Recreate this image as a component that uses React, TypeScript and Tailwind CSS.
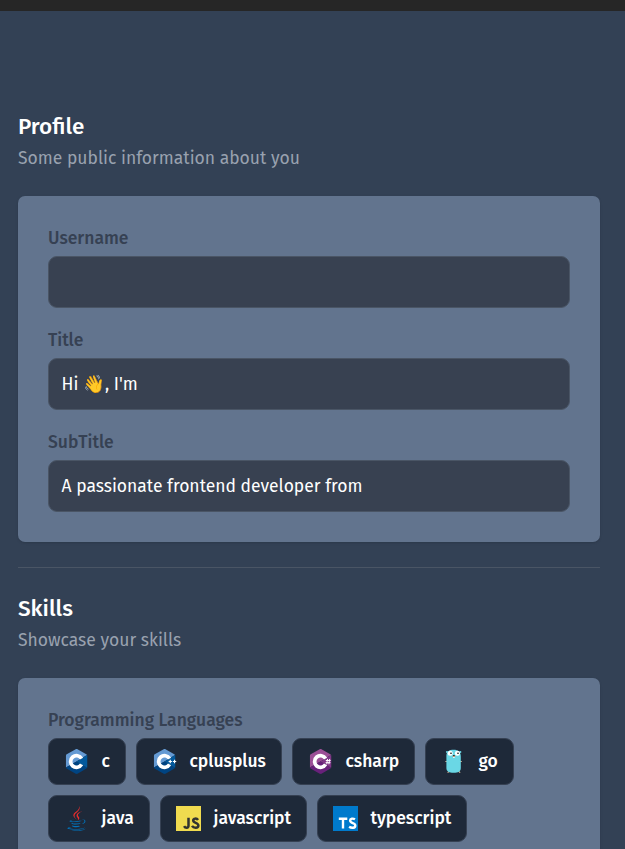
import React from 'react';

function CFamily({ light, mid, dark, mark }: { light: string; mid: string; dark: string; mark?: 'plus' | 'sharp' }) {
  return (
    <svg viewBox="0 0 128 128" className="size-[25px] shrink-0">
      <path fill={light} d="M10 95V34c0-3 1-5 4-7L60 1c3-2 6-2 9 0l45 26 4 4L64 64Z" />
      <path fill={dark} d="M10 95c0 2 1 4 3 5l47 27c3 1 6 1 9 0l46-27 3-4-54-32Z" />
      <path fill={mid} d="M118 31c1 1 1 2 1 4v58l-1 3-54-32Z" />
      <path fill="none" stroke="#fff" strokeWidth="19" d="M90 49a30 30 0 1 0 0 30" />
      {mark === 'plus' && <path stroke="#fff" strokeWidth="6" d="M85 64h17M93.500 55.500v17M107 64h17M115.500 55.500v17" />}
      {mark === 'sharp' && <path stroke="#fff" strokeWidth="5" d="M100 51l-4 27M111 51l-4 27M91 59h25M90 70h25" />}
    </svg>
  );
}

function GoIcon() {
  return (
    <svg viewBox="0 0 25 25" className="size-[25px] shrink-0">
      <path stroke="#c7ad91" strokeWidth="1.2" strokeLinecap="round" d="M4.800 12.500h2M19 12.500h1.400M7 23.300l1.500-1.500M18.800 23.300l-1.500-1.500" />
      <circle cx="6" cy="3" r="1.100" fill="#6ad7e5" />
      <circle cx="19.300" cy="3" r="1.100" fill="#6ad7e5" />
      <path fill="#6ad7e5" d="M5.400 8C5.200 2.800 8 .8 12.700.8S20 3 19.800 8v11c0 3.600-2.500 4.800-7.100 4.800S5.400 22.500 5.400 19Z" />
      <circle cx="9.200" cy="4.200" r="2.500" fill="#fff" />
      <circle cx="16.400" cy="4.200" r="2.500" fill="#fff" />
      <circle cx="10" cy="4.300" r=".8" />
      <circle cx="17" cy="4.300" r=".8" />
      <path fill="#fff" d="M12.200 7.500h1.400v1.600h-1.400Z" />
      <ellipse cx="12.900" cy="7.200" rx="1.500" ry=".9" fill="#b79c81" />
      <ellipse cx="12.900" cy="6.500" rx=".8" ry=".5" />
    </svg>
  );
}

function JavaIcon() {
  return (
    <svg viewBox="0 0 128 128" className="size-[25px] shrink-0">
      <path fill="#0074bd" d="M47.6 98.1s-4.8 2.8 3.4 3.7c9.9 1.1 14.9 1 25.8-1.1 0 0 2.9 1.8 6.9 3.4-24.5 10.4-55.3-.7-36.1-6ZM44.6 84.5s-5.3 4 2.8 4.8c10.6 1.1 18.9 1.2 33.3-1.6 0 0 2 2 5.1 3.1-29.5 8.6-62.3.7-41.2-6.3ZM102.1 108.3s3.5 2.9-3.9 5.200c-14.2 4.300-59 5.600-71.400.2-4.500-1.900 3.900-4.700 6.500-5.200 2.800-.6 4.300-.5 4.300-.5-5-3.500-32.100 6.900-13.800 9.800 50.100 8.100 91.300-3.700 78.300-9.500ZM49.9 70.2s-22.8 5.4-8.1 7.4c6.2.8 18.6.6 30.1-.3 9.4-.8 18.9-2.5 18.9-2.500s-3.300 1.400-5.700 3.100c-23.100 6.100-67.600 3.200-54.800-3 10.800-5.200 19.600-4.700 19.600-4.700ZM90.600 92.900c23.500-12.200 12.600-23.900 5-22.400-1.800.4-2.700.7-2.700.7s.7-1.100 2-1.600c15-5.300 26.500 15.500-4.800 23.800ZM52.200 126.100c22.500 1.400 57.100-.8 57.900-11.500 0 0-1.600 4-18.600 7.200-19.200 3.600-42.800 3.200-56.900.9 0 0 2.900 2.400 17.600 3.400Z" />
      <path fill="#ea2d2e" d="M76.500 1.600S89.500 14.600 64.200 34.500c-20.300 16-4.600 25.200 0 35.700-11.900-10.700-20.500-20.100-14.700-28.900C58.100 28.500 81.700 22.300 76.500 1.600ZM69.800 61c6.100 7-1.600 13.300-1.600 13.300s15.400-7.900 8.300-17.900c-6.600-9.300-11.700-13.900 15.700-29.800 0 0-43 10.700-22.400 34.400Z" />
    </svg>
  );
}

function LetterIcon({ ts = false }: { ts?: boolean }) {
  return (
    <svg viewBox="0 0 25 25" className="size-[25px] shrink-0">
      <rect width="25" height="25" fill={ts ? '#007acc' : '#f0db4f'} />
      {ts ? (
        <path fill="none" stroke="#fff" strokeWidth="2.4" d="M5.800 12.700h8.500M10 12.700v9.900M22 13.300c-2-1.100-4.900-.9-4.900 1.300 0 3 5.200 2 5.200 4.800 0 2.900-3.800 2.900-6.200 1.400" />
      ) : (
        <path fill="none" stroke="#323330" strokeWidth="2.500" d="M12.500 11.700v8.100c0 2.500-3.300 2.400-4.400.3M22 14c-1.200-2-4.800-1.800-4.800.5 0 2.800 5.200 2 5.200 5 0 3-4.800 2.900-6.400.4" />
      )}
    </svg>
  );
}

function Heading({ title, subtitle }: { title: string; subtitle: string }) {
  return (
    <header>
      <h3 className="h-8 pt-px text-[22.5px] leading-8 font-medium text-white">{title}</h3>
      <p className="pt-px text-[17.5px] leading-8 text-gray-400">{subtitle}</p>
    </header>
  );
}

const labelClass = 'block h-[26px] pt-px text-[17.5px] leading-[26px] font-medium text-gray-700';

function Field({ label, value }: { label: string; value: string }) {
  return (
    <div className="h-[78px]">
      <label className={labelClass}>{label}</label>
      <div className="mt-[5px] flex h-[52px] items-center rounded-[9px] border border-gray-600 bg-[#384151] px-[12.5px] pt-[2px] text-[17.5px] text-white">
        <span className="whitespace-pre">{value}</span>
      </div>
    </div>
  );
}

function Chip({ icon, name, width }: { icon: React.ReactNode; name: string; width: string }) {
  return (
    <div className={`flex h-[47px] items-center rounded-[9px] border border-gray-700 bg-gray-800 pl-[15px] ${width}`}>
      {icon}
      <span className="ml-[12.5px] pt-px text-[17.5px] font-medium whitespace-nowrap text-white">{name}</span>
    </div>
  );
}

export default function App() {
  return (
    <main className="h-[849px] overflow-hidden bg-[#334155] font-['Fira_Sans','Noto_Sans',sans-serif]">
      <div className="h-[11px] bg-[#262626]" />
      <div className="pt-[99px] pr-[25px] pl-[18px]">
        <Heading title="Profile" subtitle="Some public information about you" />
        <section className="mt-[21px] flex h-[346px] flex-col gap-6 rounded-[7px] bg-slate-500 px-[30px] pt-[29px] shadow-sm">
          <Field label="Username" value="" />
          <Field label="Title" value="Hi 👋, I'm" />
          <Field label="SubTitle" value="A passionate frontend developer from" />
        </section>
        <hr className="mt-[25px] mb-6 border-gray-600" />
        <Heading title="Skills" subtitle="Showcase your skills" />
        <section className="mt-[21px] h-[240px] rounded-[7px] bg-slate-500 px-[30px] pt-[29px] shadow-sm">
          <div className={labelClass}>Programming Languages</div>
          <div className="mt-[5px] flex flex-wrap gap-[10px]">
            <Chip name="c" width="w-[78px]" icon={<CFamily light="#659ad3" mid="#03599c" dark="#004482" />} />
            <Chip name="cplusplus" width="w-[146px]" icon={<CFamily light="#659ad3" mid="#03599c" dark="#004482" mark="plus" />} />
            <Chip name="csharp" width="w-[123px]" icon={<CFamily light="#9b4f96" mid="#803788" dark="#68217a" mark="sharp" />} />
            <Chip name="go" width="w-[89px]" icon={<GoIcon />} />
            <Chip name="java" width="w-[102px]" icon={<JavaIcon />} />
            <Chip name="javascript" width="w-[147px]" icon={<LetterIcon />} />
            <Chip name="typescript" width="w-[150px]" icon={<LetterIcon ts />} />
          </div>
        </section>
      </div>
    </main>
  );
}
